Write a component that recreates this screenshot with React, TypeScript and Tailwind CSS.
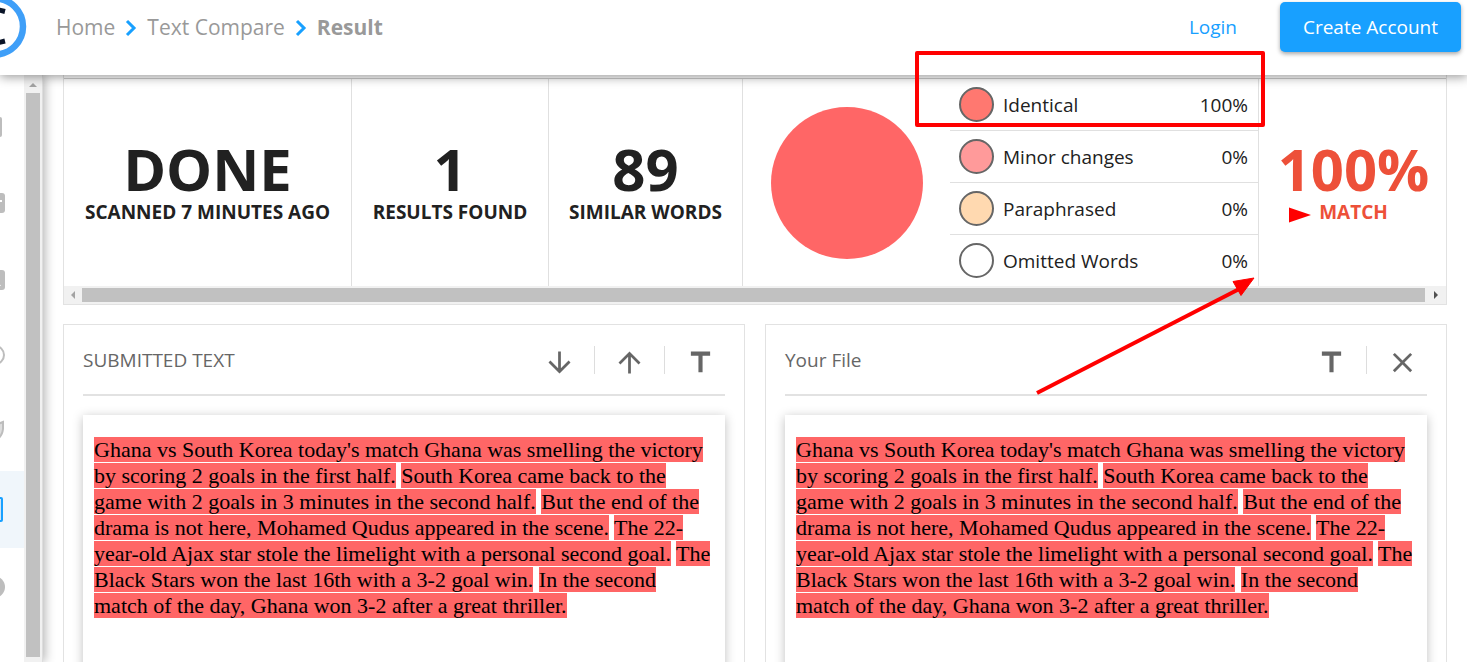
import type { ReactNode } from "react";
import { MdArrowDownward, MdArrowUpward, MdClose, MdTitle } from "react-icons/md";

const sentences = [
  "Ghana vs South Korea today's match Ghana was smelling the victory by scoring 2 goals in the first half.",
  "South Korea came back to the game with 2 goals in 3 minutes in the second half.",
  "But the end of the drama is not here, Mohamed Qudus appeared in the scene.",
  "The 22-year-old Ajax star stole the limelight with a personal second goal.",
  "The Black Stars won the last 16th with a 3-2 goal win.",
  "In the second match of the day, Ghana won 3-2 after a great thriller.",
];

const legend = [
  { label: "Identical", value: "100%", color: "bg-[#ff7870]" },
  { label: "Minor changes", value: "0%", color: "bg-[#ff9a9a]" },
  { label: "Paraphrased", value: "0%", color: "bg-[#ffd9b0]" },
  { label: "Omitted Words", value: "0%", color: "bg-white" },
];

function Stat({ value, label, width }: { value: string; label: string; width: string }) {
  return (
    <div className={`flex shrink-0 flex-col items-center justify-center border-r border-[#e0e0e0] text-[#212121] ${width}`}>
      <strong className="text-[58px] leading-[58px] font-bold">{value}</strong>
      <span className="text-[19px] leading-7 font-bold whitespace-nowrap">{label}</span>
    </div>
  );
}

function Chevron() {
  return (
    <svg width="12" height="18" viewBox="0 0 12 18" fill="none" stroke="#18a0ff" strokeWidth="3" aria-hidden="true">
      <path d="M2 2l7 7-7 7" />
    </svg>
  );
}

function Tool({ label, children }: { label: string; children: ReactNode }) {
  return (
    <button type="button" aria-label={label} className="flex h-7 w-[70px] items-center justify-center pt-[5px] text-[33px] text-[#666]">
      {children}
    </button>
  );
}

function DocumentPanel({ title, tools }: { title: string; tools: ReactNode }) {
  return (
    <section className="flex min-w-0 flex-1 flex-col border border-[#e2e2e2]">
      <div className="flex h-[69px] items-center justify-between pr-[9px] pl-[19px]">
        <h2 className="pt-0.5 text-[19px] text-[#666]">{title}</h2>
        <div className="flex divide-x divide-[#ddd]">{tools}</div>
      </div>
      <hr className="mx-[19px] border-t-2 border-[#e2e2e2]" />
      <div className="mx-[19px] mt-[19px] flex-1 bg-white px-[11px] pt-[22px] shadow-[0_2px_10px_rgba(0,0,0,0.25)]">
        <p className="font-['Liberation_Serif',serif] text-[22px] leading-[26px] text-black">
          {sentences.map((s) => (
            <span key={s}>
              <mark className="bg-[#ff6666] text-black">{s}</mark>{" "}
            </span>
          ))}
        </p>
      </div>
    </section>
  );
}

const menu = [
  { name: "Dashboard", icon: <rect x="-16" y="31" width="18" height="20" rx="2" fill="#bdbdbd" /> },
  {
    name: "Scans",
    icon: (
      <>
        <rect x="-16" y="30" width="21" height="20" rx="3" fill="#bdbdbd" />
        <path d="M-2 38h4" stroke="#fff" strokeWidth="2" />
      </>
    ),
  },
  {
    name: "Images",
    icon: (
      <>
        <rect x="-16" y="30" width="21" height="20" rx="3" fill="#bdbdbd" />
        <path d="M-3 46h4l-2-3z" fill="#fff" />
      </>
    ),
  },
  { name: "History", icon: <circle cx="-5" cy="38" r="9" fill="none" stroke="#bdbdbd" strokeWidth="2" /> },
  {
    name: "Security",
    icon: <path d="M-10 28Q-3 31 3 28V35Q2 44-6 47" fill="#ddd" stroke="#bdbdbd" strokeWidth="2" />,
  },
  {
    name: "Text Compare",
    active: true,
    icon: <rect x="-16" y="27" width="18" height="23" rx="1" fill="#cfe4f5" stroke="#18a0ff" strokeWidth="2" />,
  },
  { name: "Help", icon: <circle cx="-6" cy="39" r="11" fill="#bdbdbd" /> },
];

export default function App() {
  return (
    <div className="relative flex h-screen flex-col overflow-hidden bg-white font-['Open_Sans',sans-serif]">
      <header className="relative z-10 flex h-[75px] shrink-0 items-start justify-between bg-white pr-[6px] shadow-[0_2px_10px_rgba(0,0,0,0.4)]">
        <div className="flex items-start">
          <svg width="56" height="60" viewBox="0 0 56 60" fill="none" aria-hidden="true">
            <circle cx="-5" cy="26.5" r="28" stroke="#3f9ff8" strokeWidth="6.5" />
            <path d="M5 11.5L-3 9.5Q-16 8-16 26Q-16 44-3 43L5 41" stroke="#0a1428" strokeWidth="5" />
          </svg>
          <nav aria-label="Breadcrumb" className="flex h-14 items-center gap-[10px] text-[21px] text-[#999]">
            <a href="#home">Home</a>
            <Chevron />
            <a href="#compare">Text Compare</a>
            <Chevron />
            <span className="font-bold">Result</span>
          </nav>
        </div>
        <div className="flex items-center gap-[43px] pt-[2px] text-[19px]">
          <a href="#login" className="text-[#18a0ff]">Login</a>
          <button type="button" className="h-[50px] w-[181px] rounded-[5px] bg-[#18a0ff] text-white shadow-[0_2px_4px_rgba(0,0,0,0.35)]">
            Create Account
          </button>
        </div>
      </header>

      <div className="flex min-h-0 flex-1">
        <aside className="z-[1] flex shrink-0 border-r border-[#ddd] shadow-[2px_0_10px_rgba(0,0,0,0.3)]">
          <nav aria-label="Tools" className="w-6 overflow-hidden pt-[11px]">
            {menu.map((item) => (
              <a
                key={item.name}
                href="#tool"
                aria-label={item.name}
                className={item.active ? "block h-[77px] bg-[#f0f6fb]" : "block h-[77px]"}
              >
                <svg width="24" height="77" viewBox="0 0 24 77" aria-hidden="true">{item.icon}</svg>
              </a>
            ))}
          </nav>
          <div className="flex w-[18px] flex-col items-center bg-[#f1f1f1] pb-[5px]">
            <svg width="18" height="18" viewBox="0 0 18 18" aria-hidden="true">
              <path d="M5 12h8l-4-4z" fill="#a3a3a3" />
            </svg>
            <div className="w-[14px] flex-1 bg-[#c1c1c1]" />
          </div>
        </aside>

        <main className="flex min-w-0 flex-1 flex-col px-5">
          <section className="shrink-0 border-x border-b border-[#e2e2e2] pt-[3px]">
            <div className="flex h-[208px] overflow-hidden border-t border-[#ccc]">
              <Stat value="DONE" label="SCANNED 7 MINUTES AGO" width="w-[288px]" />
              <Stat value="1" label="RESULTS FOUND" width="w-[197px]" />
              <Stat value="89" label="SIMILAR WORDS" width="w-[194px]" />
              <div className="flex flex-1 border-r border-[#e0e0e0]">
                <div className="flex flex-1 items-center justify-center">
                  <div className="size-[152px] rounded-full bg-[#ff6666]" />
                </div>
                <ul className="w-[308px] text-[19px] text-[#212121]">
                  {legend.map((item) => (
                    <li key={item.label} className="flex h-[52px] items-center border-b border-[#e0e0e0] pr-[10px] pl-[9px] last:border-transparent">
                      <span className={`mr-[9px] size-[35px] rounded-full border-2 border-[#666] ${item.color}`} />
                      <span className="flex-1 pt-0.5">{item.label}</span>
                      <span className="pt-0.5">{item.value}</span>
                    </li>
                  ))}
                </ul>
              </div>
              <div className="flex w-[187px] shrink-0 flex-col items-center justify-center pl-0.5 text-[#ed5039]">
                <strong className="text-[58px] leading-[58px] font-bold">100%</strong>
                <span className="text-[19px] leading-7 font-bold">MATCH</span>
              </div>
            </div>
            <div className="flex h-[18px] items-center bg-[#f1f1f1]">
              <svg width="18" height="18" viewBox="0 0 18 18" aria-hidden="true">
                <path d="M11 5v8l-4-4z" fill="#a3a3a3" />
              </svg>
              <div className="h-[14px] flex-1 bg-[#c1c1c1]" />
              <svg width="21" height="18" viewBox="0 0 21 18" aria-hidden="true">
                <path d="M9 5v8l4-4z" fill="#505050" />
              </svg>
            </div>
          </section>

          <div className="mt-[19px] flex min-h-[400px] flex-1 gap-5">
            <DocumentPanel
              title="SUBMITTED TEXT"
              tools={
                <>
                  <Tool label="Next match"><MdArrowDownward /></Tool>
                  <Tool label="Previous match"><MdArrowUpward /></Tool>
                  <Tool label="Text view"><MdTitle /></Tool>
                </>
              }
            />
            <DocumentPanel
              title="Your File"
              tools={
                <>
                  <Tool label="Text view"><MdTitle /></Tool>
                  <Tool label="Close"><MdClose /></Tool>
                </>
              }
            />
          </div>
        </main>
      </div>

      {/* Hand-drawn callouts laid over the results */}
      <div className="pointer-events-none absolute top-[51px] right-[202px] z-20 h-[76px] w-[350px] rounded-[2px] border-4 border-[#ff0000]" />
      <svg
        className="pointer-events-none absolute top-[200px] right-[147px] z-20"
        width="290"
        height="200"
        viewBox="0 0 290 200"
        fill="#ff0000"
        aria-hidden="true"
      >
        <path d="M7 193L217 85" stroke="#ff0000" strokeWidth="4" />
        <path d="M224 78L203 81.5L211 95.5Z" stroke="#ff0000" />
        <path d="M259 7.5V22.5L281 15Z" />
      </svg>
    </div>
  );
}
